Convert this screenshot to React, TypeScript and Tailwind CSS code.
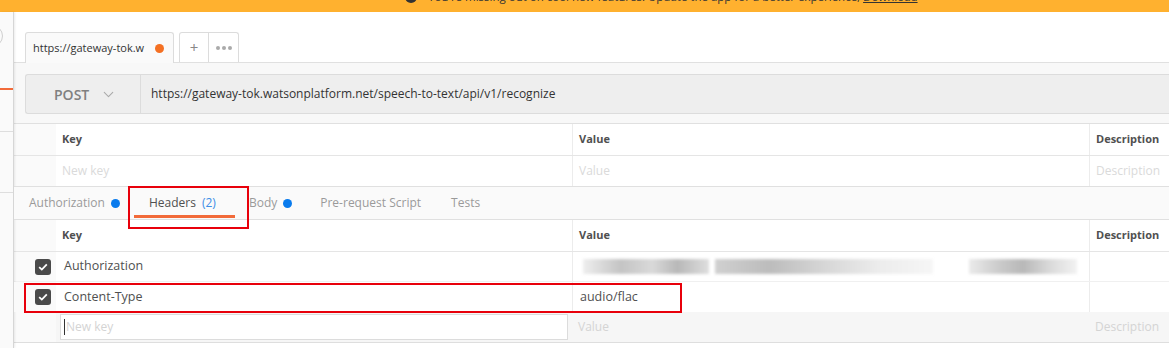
import { ChevronDown } from 'lucide-react'

const F = "font-['Open_Sans',_'Liberation_Sans',_sans-serif]"

function Dot({ c = 'bg-[#097bed]' }: { c?: string }) {
  return <span className={`inline-block h-[9px] w-[9px] rounded-full ${c}`} />
}

function Check() {
  return (
    <span className="flex h-[16px] w-[16px] items-center justify-center rounded-[3px] bg-[#4a4a4a]">
      <svg width="10" height="8" viewBox="0 0 10 8">
        <path d="M1.2 4.2 L3.8 6.6 L8.8 1.4" fill="none" stroke="#fff" strokeWidth="1.8" />
      </svg>
    </span>
  )
}

function HeadRow() {
  return (
    <div className="flex h-[32px] border-b border-[#e5e5e5] text-[11px] font-bold text-[#505050]">
      <div className="w-[42px] shrink-0 bg-[#fafafa]" />
      <div className="flex w-[516px] shrink-0 items-center pl-[6px]">Key</div>
      <div className="flex w-[517px] shrink-0 items-center border-l border-[#ececec] pl-[6px]">Value</div>
      <div className="flex flex-1 items-center border-l border-[#ececec] pl-[6px]">Description</div>
    </div>
  )
}

export default function App() {
  return (
    <div className={`relative h-[348px] w-[1169px] overflow-hidden bg-white ${F}`}>
      {/* update banner, cut off at the top */}
      <div className="h-[12px] overflow-hidden bg-[#ffb12f]">
        <div className="-mt-[11px] flex items-center pl-[405px] text-[11.5px] leading-[16px] text-[#333]">
          <span className="mr-[11px] h-[12px] w-[12px] rounded-full bg-[#333]" />
          <span>
            You're missing out on cool new features. Update the app for a better experience,{' '}
            <span className="underline">Download</span>
          </span>
        </div>
      </div>

      <div className="flex h-[336px]">
        {/* sidebar edge */}
        <div className="relative w-[14px] shrink-0 border-r border-[#d6d6d6] bg-[#fafafa] shadow-[1px_0_2px_rgba(0,0,0,0.08)]">
          <div className="absolute -left-[20px] top-[13px] h-[22px] w-[23px] rounded-full border border-[#cfcfcf]" />
          <div className="absolute left-0 top-[76px] h-[2px] w-[13px] bg-[#f26b3a]" />
          <div className="absolute left-0 top-[119px] h-px w-[13px] bg-[#dedede]" />
          <div className="absolute left-0 top-[180px] h-px w-[13px] bg-[#dedede]" />
        </div>

        <div className="min-w-0 flex-1">
          {/* tabs */}
          <div className="flex h-[51px] items-end border-b border-[#e0e0e0] pl-[11px]">
            <div className="-mb-px flex h-[31px] w-[149px] items-center justify-between rounded-t-[3px] border border-b-0 border-[#dcdcdc] bg-[#fafafa] pl-[7px] pr-[9px] text-[11px] text-[#333]">
              <span>https://gateway-tok.w</span>
              <Dot c="bg-[#f47023]" />
            </div>
            <div className="ml-[5px] flex h-[30px] overflow-hidden rounded-t-[3px] border border-b-0 border-[#dcdcdc] bg-white">
              <div className="flex w-[29px] items-center justify-center border-r border-[#dcdcdc] text-[15px] text-[#888]">+</div>
              <div className="flex w-[29px] items-center justify-center gap-[2px]">
                <span className="h-[4px] w-[4px] rounded-full bg-[#aaa]" />
                <span className="h-[4px] w-[4px] rounded-full bg-[#aaa]" />
                <span className="h-[4px] w-[4px] rounded-full bg-[#aaa]" />
              </div>
            </div>
          </div>

          {/* url bar */}
          <div className="border-b border-[#e0e0e0] bg-[#f8f8f8] pb-[9px] pl-[11px] pt-[11px]">
            <div className="flex h-[40px] rounded-l-[3px] border border-r-0 border-[#dcdcdc] bg-[#eeeeee]">
              <div className="flex w-[115px] shrink-0 items-center gap-[11px] border-r border-[#dcdcdc] pl-[28px] text-[14px] font-semibold text-[#808080]">
                POST
                <ChevronDown size={17} strokeWidth={1.5} className="text-[#aaa]" />
              </div>
              <div className="flex items-center pl-[10px] text-[12px] text-[#333]">
                https://gateway-tok.watsonplatform.net/speech-to-text/api/v1/recognize
              </div>
            </div>
          </div>

          {/* params table behind */}
          <HeadRow />
          <div className="flex h-[30px] text-[12px] text-[#dadada]">
            <div className="w-[42px] shrink-0 bg-[#fafafa]" />
            <div className="flex w-[516px] shrink-0 items-center pl-[6px]">New key</div>
            <div className="flex w-[517px] shrink-0 items-center border-l border-[#ececec] pl-[6px]">Value</div>
            <div className="flex flex-1 items-center border-l border-[#ececec] pl-[6px]">Description</div>
          </div>

          {/* request tabs */}
          <div className="relative flex h-[34px] items-center border-y border-[#e0e0e0] bg-[#fafafa] text-[12px] text-[#9a9a9a]">
            <div className="flex items-center gap-[6px] pl-[15px]">
              Authorization <Dot />
            </div>
            <div className="relative ml-[14px] flex h-full w-[101px] items-center pl-[15px] text-[#505050]">
              Headers<span className="ml-[6px] text-[#3d8ee6]">(2)</span>
              <span className="absolute bottom-[1px] left-0 right-0 h-[3px] bg-[#f26b3a]" />
            </div>
            <div className="ml-[14px] flex items-center gap-[6px]">
              Body <Dot />
            </div>
            <div className="ml-[28px]">Pre-request Script</div>
            <div className="ml-[30px]">Tests</div>
            <div className="absolute -top-[1px] left-[114px] h-[43px] w-[121px] border-2 border-[#e8000b]" />
          </div>

          {/* headers table */}
          <HeadRow />
          <div className="flex h-[30px] border-b border-[#f0f0f0] text-[12.5px] text-[#505050]">
            <div className="flex w-[42px] shrink-0 items-center justify-end bg-[#fafafa] pr-[5px]">
              <Check />
            </div>
            <div className="flex w-[516px] shrink-0 items-center pl-[8px]">Authorization</div>
            <div className="flex w-[517px] shrink-0 items-center border-l border-[#ececec] pl-[10px]">
              <span className="h-[15px] w-[126px] bg-[linear-gradient(90deg,#eeeeee,#c4c4c4_30%,#d9d9d9_55%,#b8b8b8_75%,#dedede)] blur-[1.5px]" />
              <span className="ml-[6px] h-[15px] w-[218px] bg-[linear-gradient(90deg,#d0d0d0,#bcbcbc_25%,#d6d6d6_50%,#ececec_75%,#f6f6f6)] blur-[1.5px]" />
              <span className="ml-[36px] h-[15px] w-[108px] bg-[linear-gradient(90deg,#eaeaea,#c9c9c9_30%,#b8b8b8_50%,#dadada_75%,#f2f2f2)] blur-[1.5px]" />
            </div>
            <div className="flex-1 border-l border-[#ececec]" />
          </div>
          <div className="relative flex h-[30px] text-[12.5px] text-[#505050]">
            <div className="flex w-[42px] shrink-0 items-center justify-end bg-[#fafafa] pr-[5px]">
              <Check />
            </div>
            <div className="flex w-[516px] shrink-0 items-center pl-[8px]">Content-Type</div>
            <div className="flex w-[517px] shrink-0 items-center border-l border-[#ececec] pl-[7px]">audio/flac</div>
            <div className="flex-1 border-l border-[#ececec]" />
            <div className="absolute left-[10px] top-[1px] h-[30px] w-[658px] border-2 border-[#e8000b]" />
          </div>
          <div className="flex h-[31px] border-b border-[#dedede] bg-[#f6f6f6] text-[12px] text-[#d4d4d4]">
            <div className="w-[42px] shrink-0 bg-[#fafafa]" />
            <div className="flex w-[516px] shrink-0 items-center py-[2px] pl-[4px] pr-[4px]">
              <div className="flex h-full w-full items-center border border-[#dcdcdc] bg-white pl-[3px]">
                <span className="mr-[1px] h-[16px] w-px bg-[#333]" />
                New key
              </div>
            </div>
            <div className="flex w-[517px] shrink-0 items-center pl-[6px]">Value</div>
            <div className="flex flex-1 items-center pl-[6px]">Description</div>
          </div>
        </div>
      </div>
    </div>
  )
}
